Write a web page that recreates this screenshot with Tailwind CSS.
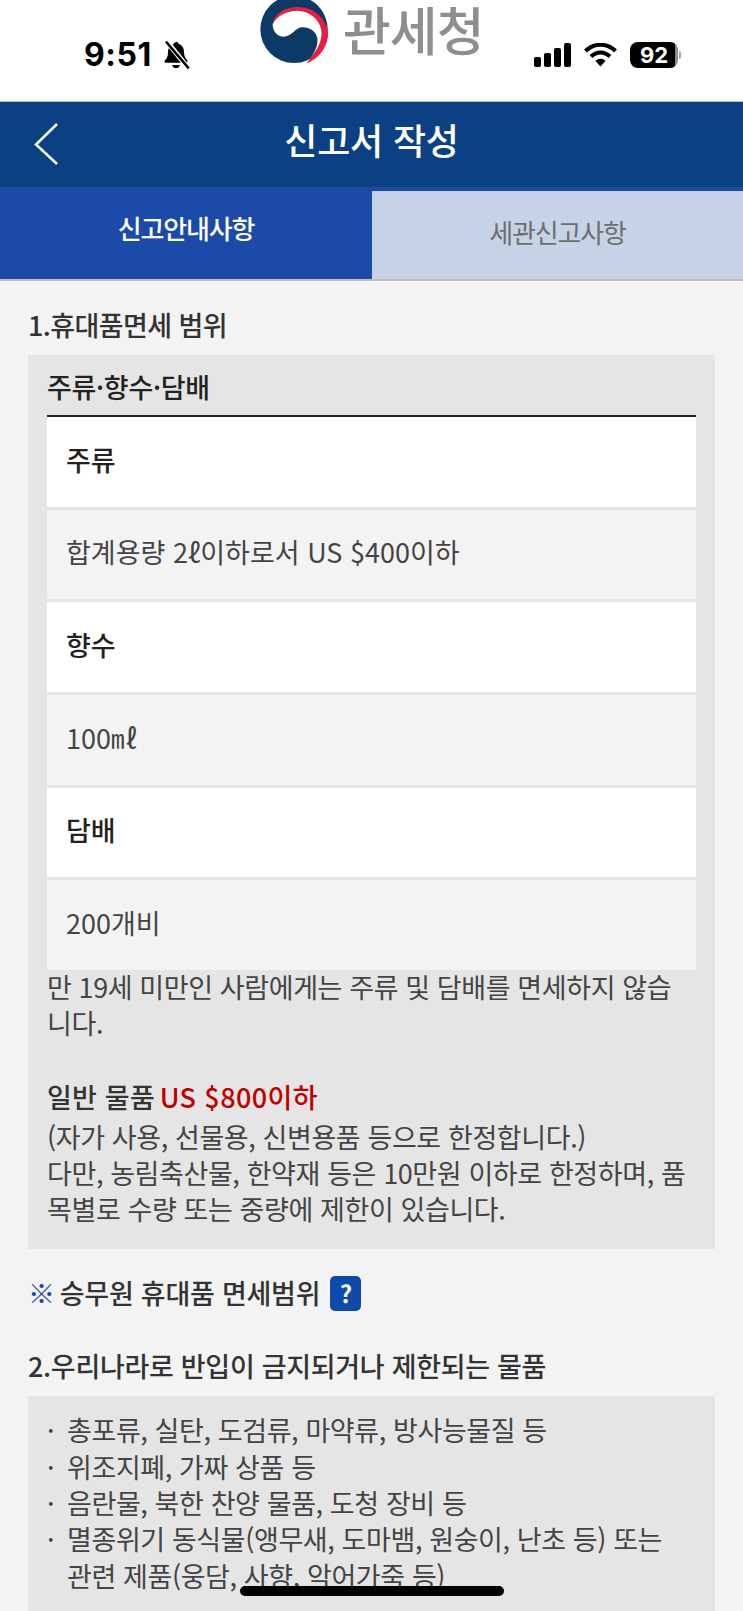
<!DOCTYPE html>
<html lang="ko">
<head>
<meta charset="utf-8">
<script src="https://cdn.jsdelivr.net/npm/@tailwindcss/browser@4"></script>
</head>
<body class="bg-[#f3f3f3]">
<div class="relative w-[743px] h-[1611px] overflow-hidden bg-[#f3f3f3] font-['Noto_Sans_CJK_KR','Noto_Sans',sans-serif] text-[#444]">

  <header class="h-[101px] bg-white flex items-start">
    <div class="ml-[84px] w-[176px] mt-[38px] flex items-center gap-[9px]">
      <span class="font-['Inter',sans-serif] font-bold text-[32px] leading-[34px] tracking-[0.5px] text-black">9:51</span>
      <svg class="w-[30px] h-[30px] shrink-0" viewBox="0 0 27 27"><path d="M13.500 1.500c1.200 0 2 .8 2.200 1.800 3.200 1 5 3.800 5 7.200 0 3.500.8 5.500 3 7.500v2.500H3.300V18.500c2.200-2 3-4 3-7.500 0-3.400 1.800-6.200 5-7.200.2-1 1-1.800 2.200-1.800zM10 22.500h7c-.3 1.800-1.800 3-3.500 3s-3.200-1.200-3.500-3z" fill="#000"/><path d="M5 1 25 26" stroke="#fff" stroke-width="4.500"/><path d="M4.500 1.500 25 25.500" stroke="#000" stroke-width="2.200"/></svg>
    </div>
    <div class="flex items-start">
      <svg class="w-[70px] h-[64px]" viewBox="60 0 210 192"><circle cx="162" cy="88" r="101" fill="#0b3a66"/><path d="M100 62C115 25 170 10 215 30 250 48 268 85 264 110 258 150 230 180 200 189 225 160 245 130 245 100 245 70 220 38 180 32 145 28 115 45 100 72Z" fill="#ee1c40"/><path d="M98 72C115 45 145 30 180 33 220 38 245 70 245 100 245 130 225 160 200 187 225 160 235 135 232 115 228 92 205 80 185 82 165 84 158 108 132 110 112 110 98 95 98 72Z" fill="#fff"/></svg>
      <span class="ml-[13px] font-medium text-[52px] leading-[58px] tracking-[-1px] text-[#8e8e8e]">관세청</span>
    </div>
    <div class="ml-auto mr-[62px] mt-[42px] flex items-center gap-[13px]">
      <div class="flex items-end gap-[3px] h-[24px]">
        <span class="w-[7px] h-[10px] rounded-[2px] bg-black"></span>
        <span class="w-[7px] h-[14px] rounded-[2px] bg-black"></span>
        <span class="w-[7px] h-[19px] rounded-[2px] bg-black"></span>
        <span class="w-[7px] h-[24px] rounded-[2px] bg-black"></span>
      </div>
      <svg class="w-[33px] h-[24px]" viewBox="0 0 32 24"><path d="M1 8C9.500-.5 22.500-.5 31 8" fill="none" stroke="#000" stroke-width="4"/><path d="M6.500 13.500c5.500-5.500 13.500-5.500 19 0" fill="none" stroke="#000" stroke-width="4"/><path d="M11 18c3-3 7-3 10 0l-5 5.500z" fill="#000"/></svg>
      <div class="flex items-center gap-[1px]">
        <div class="w-[48px] h-[26px] rounded-[8px] flex items-center justify-center bg-[linear-gradient(90deg,#000_0,#000_93%,#8a8a8a_93%)] font-['Inter',sans-serif] font-bold text-[22px] leading-none text-white">92</div>
        <span class="w-[2px] h-[8px] rounded-r-[2px] bg-[#aaa]"></span>
      </div>
    </div>
  </header>

  <div class="h-[86px] bg-[#0b4182] flex items-center relative border-t border-[#b9c4d4]">
    <svg class="absolute left-[33px] top-[20px] w-[26px] h-[44px]" viewBox="0 0 26 44"><path d="M24 2 3 22.500 24 42" fill="none" stroke="#fff" stroke-width="2.500"/></svg>
    <h1 class="w-full text-center font-medium text-[36px] leading-[50px] tracking-[-0.2px] text-white mt-[-12px]">신고서 작성</h1>
  </div>

  <div class="flex h-[92px] border-b-[2px] border-[#bdbdbd] box-content bg-[#1b4aa8]">
    <div class="w-[372px] pb-[11px] flex items-center justify-center font-medium text-[26px] tracking-[-1.200px] text-white">신고안내사항</div>
    <div class="flex-1 mt-[4px] pb-[7px] bg-[#c6d3e6] flex items-center justify-center text-[26px] tracking-[-1.200px] text-[#6e6e6e]">세관신고사항</div>
  </div>

  <main class="px-[28px]">
    <h2 class="pt-[25px] pb-[11px] font-medium text-[27px] leading-[38px] tracking-[-0.6px] text-[#333]">1.휴대품면세 범위</h2>

    <section class="bg-[#e5e5e5] px-[19px] pb-[22px]">
      <h3 class="h-[62px] pt-[13px] border-b-[2px] border-[#222] font-medium text-[27px] leading-[38px] tracking-[-0.3px] text-[#222]">주류·향수·담배</h3>
      <div class="h-[92.7px] px-[19px] pb-[4px] flex items-center bg-white border-b-[3px] border-[#e5e5e5] font-medium text-[27px] text-[#222]">주류</div>
      <div class="h-[92.7px] px-[19px] pb-[4px] flex items-center bg-[#f3f3f3] border-b-[3px] border-[#e5e5e5] text-[27px]">합계용량 2ℓ이하로서 US $400이하</div>
      <div class="h-[92.7px] px-[19px] pb-[4px] flex items-center bg-white border-b-[3px] border-[#e5e5e5] font-medium text-[27px] text-[#222]">향수</div>
      <div class="h-[92.7px] px-[19px] pb-[4px] flex items-center bg-[#f3f3f3] border-b-[3px] border-[#e5e5e5] text-[27px]">100㎖</div>
      <div class="h-[92.7px] px-[19px] pb-[4px] flex items-center bg-white border-b-[3px] border-[#e5e5e5] font-medium text-[27px] text-[#222]">담배</div>
      <div class="h-[90px] px-[19px] pb-[4px] flex items-center bg-[#f3f3f3] text-[27px]">200개비</div>

      <p class="mt-[-1px] text-[27px] leading-[36px] tracking-[-0.4px] whitespace-nowrap">만 19세 미만인 사람에게는 주류 및 담배를 면세하지 않습<br>니다.</p>
      <p class="mt-[36px] text-[27px] leading-[40px] tracking-[0.2px] whitespace-nowrap font-medium text-[#333]">일반 물품 <span class="ml-[-3px] tracking-[0.4px] text-[#c00000]">US $800이하</span></p>
      <p class="mt-[2px] text-[27px] leading-[36px] tracking-[-0.4px] whitespace-nowrap">(자가 사용, 선물용, 신변용품 등으로 한정합니다.)<br>다만, 농림축산물, 한약재 등은 10만원 이하로 한정하며, 품<br>목별로 수량 또는 중량에 제한이 있습니다.</p>
    </section>

    <div class="mt-[26px] h-[36px] flex items-center font-medium text-[27px] tracking-[-0.25px] text-[#333]">
      <span class="text-[#1b4aa8] font-bold mr-[5px]">※</span>승무원 휴대품 면세범위
      <span class="ml-[10px] w-[31px] h-[35px] rounded-[5px] bg-[#0f4aa8] flex items-center justify-center text-white font-bold text-[24px] leading-none">?</span>
    </div>

    <h2 class="mt-[36px] pb-[11px] font-medium text-[27px] leading-[38px] tracking-[-0.3px] text-[#333] whitespace-nowrap">2.우리나라로 반입이 금지되거나 제한되는 물품</h2>

    <section class="bg-[#e5e5e5] h-[300px] pt-[16px] pl-[19px] text-[27px] leading-[36.300px] tracking-[-0.4px]">
      <ul class="whitespace-nowrap">
        <li class="flex"><span class="w-[20px]">·</span>총포류, 실탄, 도검류, 마약류, 방사능물질 등</li>
        <li class="flex"><span class="w-[20px]">·</span>위조지폐, 가짜 상품 등</li>
        <li class="flex"><span class="w-[20px]">·</span>음란물, 북한 찬양 물품, 도청 장비 등</li>
        <li class="flex"><span class="w-[20px]">·</span><span>멸종위기 동식물(앵무새, 도마뱀, 원숭이, 난초 등) 또는<br>관련 제품(웅담, 사향, 악어가죽 등)</span></li>
      </ul>
    </section>
  </main>

  <div class="absolute left-[240px] top-[1586px] w-[264px] h-[10px] rounded-full bg-black"></div>
</div>
</body>
</html>
